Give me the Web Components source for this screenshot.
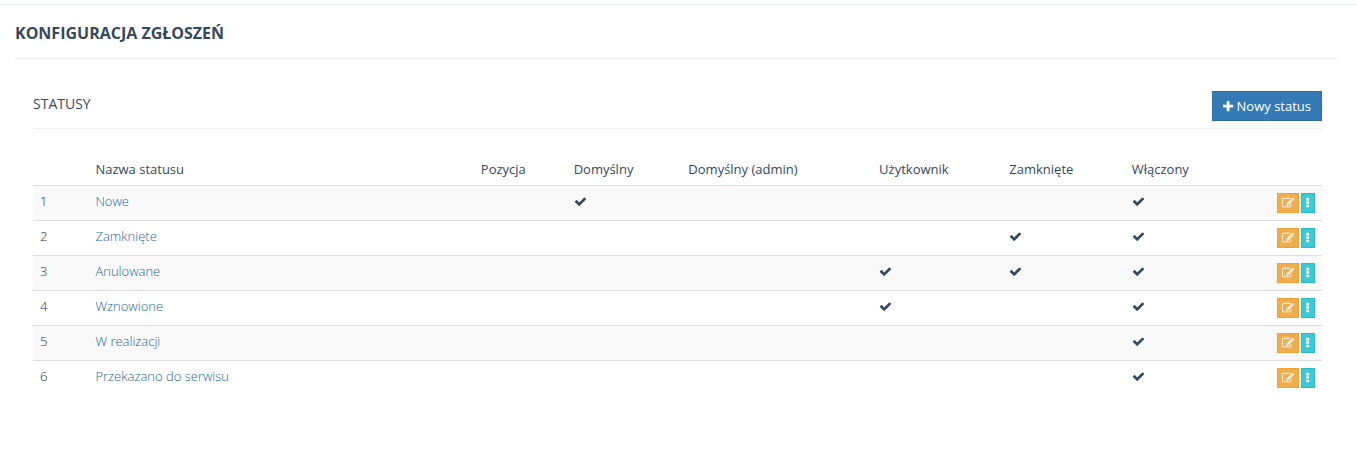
<!DOCTYPE html>
<html lang="pl">
<head>
  <meta charset="utf-8">
  <meta name="viewport" content="width=device-width, initial-scale=1">
  <title>Konfiguracja zgłoszeń</title>
  <style>
    body {
      margin: 0;
      background: #fff;
      color: #34495e;
      font: 400 13px/18px "Open Sans", sans-serif;
    }
  </style>
</head>
<body>
  <config-page heading="Konfiguracja zgłoszeń">
    <status-panel heading="Statusy">
      <action-button slot="actions" variant="primary" icon="plus">Nowy status</action-button>
      <status-table></status-table>
    </status-panel>
  </config-page>

  <script>
    const ICONS = {
      check: {
        box: '0 0 1792 1792',
        path: 'M1671 566q0 40-28 68l-724 724-136 136q-28 28-68 28t-68-28l-136-136-362-362q-28-28-28-68t28-68l136-136q28-28 68-28t68 28l294 295 656-657q28-28 68-28t68 28l136 136q28 28 28 68z'
      },
      plus: {
        box: '192 0 1408 1792',
        path: 'M1600 736v192q0 40-28 68t-68 28h-416v416q0 40-28 68t-68 28h-192q-40 0-68-28t-28-68v-416h-416q-40 0-68-28t-28-68v-192q0-40 28-68t68-28h416v-416q0-40 28-68t68-28h192q40 0 68 28t28 68v416h416q40 0 68 28t28 68z'
      },
      edit: {
        box: '0 0 1792 1792',
        path: 'M888 1184l116-116-152-152-116 116v56h96v96h56zm440-720q-16-16-33 1l-350 350q-17 17-1 33t33-1l350-350q17-17 1-33zm80 594v190q0 119-84.5 203.5t-203.5 84.5h-832q-119 0-203.5-84.5t-84.5-203.5v-832q0-119 84.5-203.5t203.5-84.5h832q63 0 117 25 15 7 18 23 3 17-9 29l-49 49q-14 14-32 8-23-6-45-6h-832q-66 0-113 47t-47 113v832q0 66 47 113t113 47h832q66 0 113-47t47-113v-126q0-13 9-22l64-64q15-15 35-7t20 29zm-96-738l288 288-672 672h-288v-288zm444 132l-92 92-288-288 92-92q28-28 68-28t68 28l152 152q28 28 28 68t-28 68z'
      },
      more: {
        box: '640 0 512 1792',
        path: 'M1120 1248v192q0 40-28 68t-68 28h-256q-40 0-68-28t-28-68v-192q0-40 28-68t68-28h256q40 0 68 28t28 68zm0-512v192q0 40-28 68t-68 28h-256q-40 0-68-28t-28-68v-192q0-40 28-68t68-28h256q40 0 68 28t28 68zm0-512v192q0 40-28 68t-68 28h-256q-40 0-68-28t-28-68v-192q0-40 28-68t68-28h256q40 0 68 28t28 68z'
      }
    };

    class AppIcon extends HTMLElement {
      connectedCallback() {
        const icon = ICONS[this.getAttribute('name')];
        this.attachShadow({ mode: 'open' });
        this.shadowRoot.innerHTML = `
          <style>
            :host {
              display: inline-flex;
            }

            svg {
              display: block;
              height: var(--icon-size, 13px);
              fill: currentColor;
            }
          </style>
          <svg viewBox="${icon.box}" aria-hidden="true"><path d="${icon.path}"/></svg>
        `;
      }
    }

    class ActionButton extends HTMLElement {
      connectedCallback() {
        const label = this.getAttribute('label');
        this.attachShadow({ mode: 'open' });
        this.shadowRoot.innerHTML = `
          <style>
            :host {
              display: inline-flex;
              --icon-size: 12px;
            }

            :host([variant="primary"]) {
              --fill: #337ab7;
              --edge: #2e6da4;
              --icon-size: 13px;
            }

            :host([variant="warning"]) {
              --fill: #f0ad4e;
              --edge: #eea236;
            }

            :host([variant="info"]) {
              --fill: #3fc9d5;
              --edge: #2bb8c4;
            }

            button {
              display: flex;
              align-items: center;
              justify-content: center;
              gap: 3px;
              min-width: 14px;
              height: 20px;
              padding: 0 4px;
              border: 1px solid var(--edge);
              background: var(--fill);
              color: #fff;
              font: inherit;
              cursor: pointer;
            }

            :host([variant="primary"]) button {
              height: 30px;
              padding: 0 10px;
            }

            button:hover {
              background: var(--edge);
            }
          </style>
          <button type="button" ${label ? `aria-label="${label}"` : ''}>
            <app-icon name="${this.getAttribute('icon')}"></app-icon><slot></slot>
          </button>
        `;
      }
    }

    class ConfigPage extends HTMLElement {
      connectedCallback() {
        this.attachShadow({ mode: 'open' });
        this.shadowRoot.innerHTML = `
          <style>
            :host {
              display: block;
              margin-top: 4px;
              padding: 0 17px 0 15px;
              border-top: 1px solid #e7ecf1;
            }

            h1 {
              margin: 0;
              padding: 17px 0 14px;
              border-bottom: 1px solid #eee;
              font-size: 16px;
              font-weight: 700;
              line-height: 22px;
              text-transform: uppercase;
            }

            main {
              padding: 32px 18px;
            }
          </style>
          <h1>${this.getAttribute('heading')}</h1>
          <main><slot></slot></main>
        `;
      }
    }

    class StatusPanel extends HTMLElement {
      connectedCallback() {
        this.attachShadow({ mode: 'open' });
        this.shadowRoot.innerHTML = `
          <style>
            :host {
              display: block;
            }

            header {
              display: flex;
              justify-content: space-between;
              align-items: flex-start;
              padding-bottom: 7px;
              margin-bottom: 24px;
              border-bottom: 1px solid #eee;
            }

            h2 {
              margin: 0;
              font-size: 14px;
              font-weight: 400;
              line-height: 26px;
              text-transform: uppercase;
            }
          </style>
          <section>
            <header>
              <h2>${this.getAttribute('heading')}</h2>
              <slot name="actions"></slot>
            </header>
            <slot></slot>
          </section>
        `;
      }
    }

    const FLAGS = ['default', 'adminDefault', 'user', 'closed', 'enabled'];

    const STATUSES = [
      { name: 'Nowe', flags: ['default', 'enabled'] },
      { name: 'Zamknięte', flags: ['closed', 'enabled'] },
      { name: 'Anulowane', flags: ['user', 'closed', 'enabled'] },
      { name: 'Wznowione', flags: ['user', 'enabled'] },
      { name: 'W realizacji', flags: ['enabled'] },
      { name: 'Przekazano do serwisu', flags: ['enabled'] }
    ];

    class StatusTable extends HTMLElement {
      connectedCallback() {
        this.attachShadow({ mode: 'open' });
        this.shadowRoot.innerHTML = `
          <style>
            :host {
              display: block;
            }

            table {
              width: 100%;
              table-layout: fixed;
              border-collapse: separate;
              border-spacing: 0;
            }

            .number { width: 4.3%; }
            .name { width: 29.9%; }
            .position { width: 7.2%; }
            .default { width: 8.9%; }
            .admin { width: 14.8%; }
            .user { width: 10.1%; }
            .closed { width: 9.5%; }

            th,
            td {
              padding: 7px;
              text-align: left;
              vertical-align: top;
            }

            th {
              font-weight: 500;
            }

            td {
              height: 20px;
              border-top: 1px solid #ddd;
              color: #22364a;
              font-weight: 300;
              line-height: 16px;
            }

            tbody tr:nth-child(odd) {
              background: #f9f9f9;
            }

            a {
              color: #2568a5;
              text-decoration: none;
            }

            a:hover {
              text-decoration: underline;
            }

            td app-icon {
              padding-top: 2px;
              color: #34495e;
              vertical-align: top;
            }

            .actions {
              display: flex;
              justify-content: flex-end;
              gap: 2px;
            }
          </style>
          <table>
            <colgroup>
              <col class="number">
              <col class="name">
              <col class="position">
              <col class="default">
              <col class="admin">
              <col class="user">
              <col class="closed">
              <col>
              <col>
            </colgroup>
            <thead>
              <tr>
                <th></th>
                <th>Nazwa statusu</th>
                <th>Pozycja</th>
                <th>Domyślny</th>
                <th>Domyślny (admin)</th>
                <th>Użytkownik</th>
                <th>Zamknięte</th>
                <th>Włączony</th>
                <th></th>
              </tr>
            </thead>
            <tbody>
              ${STATUSES.map((status, i) => this.row(status, i + 1)).join('')}
            </tbody>
          </table>
        `;
      }

      row(status, number) {
        const flags = FLAGS.map(flag =>
          `<td>${status.flags.includes(flag) ? '<app-icon name="check"></app-icon>' : ''}</td>`
        ).join('');
        return `
          <tr>
            <td>${number}</td>
            <td><a href="#status-${number}">${status.name}</a></td>
            <td></td>
            ${flags}
            <td>
              <div class="actions">
                <action-button variant="warning" icon="edit" label="Edytuj"></action-button>
                <action-button variant="info" icon="more" label="Więcej"></action-button>
              </div>
            </td>
          </tr>
        `;
      }
    }

    customElements.define('app-icon', AppIcon);
    customElements.define('action-button', ActionButton);
    customElements.define('config-page', ConfigPage);
    customElements.define('status-panel', StatusPanel);
    customElements.define('status-table', StatusTable);
  </script>
</body>
</html>
